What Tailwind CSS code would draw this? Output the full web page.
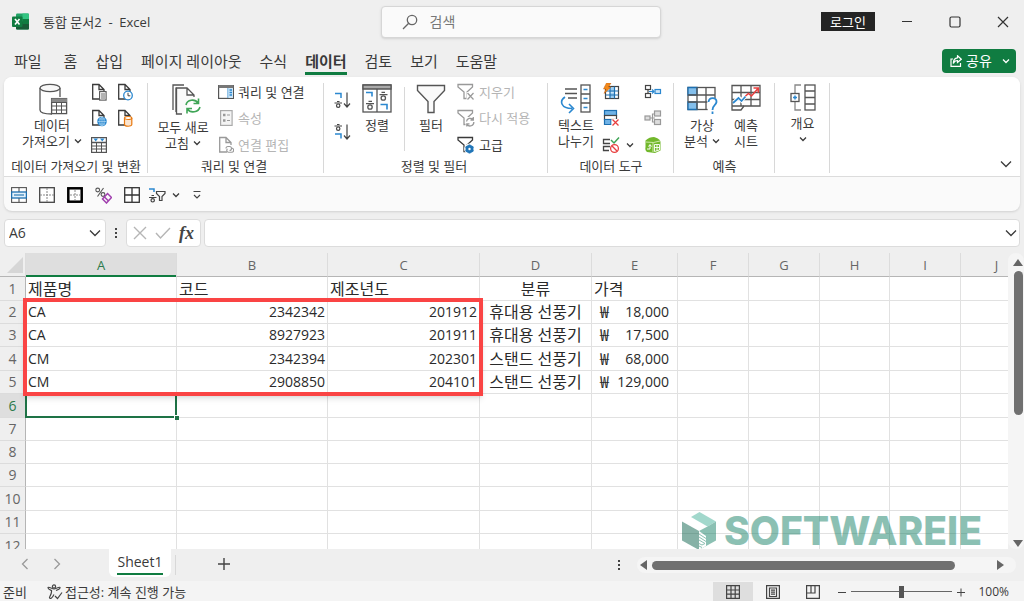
<!DOCTYPE html>
<html lang="ko">
<head>
<meta charset="utf-8">
<title>통합 문서2 - Excel</title>
<meta name="viewport" content="width=device-width, initial-scale=1">
<script src="https://cdn.jsdelivr.net/npm/@tailwindcss/browser@4"></script>
</head>
<body class="flex h-screen flex-col overflow-hidden bg-[#efefef] font-['Open_Sans','Noto_Sans_CJK_KR',sans-serif] text-[13px] leading-4 text-[#3a3a3a]">

<svg class="hidden">
  <symbol id="chev" viewBox="0 0 8 8"><path d="M1 2.5 4 5.5 7 2.5" fill="none" stroke="currentColor" stroke-width="1.3"/></symbol>
  <symbol id="chevL" viewBox="0 0 12 12"><path d="M1 3.5 6 8.5 11 3.5" fill="none" stroke="currentColor" stroke-width="1.3"/></symbol>
  <symbol id="page" viewBox="0 0 16 18"><path d="M9 16H1.7V1.5H8L13 6.5V9M8 1.5V6.5H13" fill="none" stroke="currentColor" stroke-width="1.3"/></symbol>
  <symbol id="funnel" viewBox="0 0 18 18"><path d="M1 1.5H15.500V4L10 9V15.500H7V9L1 4Z" fill="none" stroke="currentColor" stroke-width="1.3"/></symbol>
</svg>

<header class="grid h-[43px] shrink-0 grid-cols-[1fr_280px_1fr] items-center pl-[17px]">
  <div class="flex items-center gap-[14px]">
    <svg class="-ml-[5px] h-[17px] w-[17px]" viewBox="0 0 17 17">
      <rect x="4" y="0.500" width="13" height="16" rx="1.200" fill="#21a366"/><path d="M10.500 .5H16a1 1 0 0 1 1 1V6H10.500Z" fill="#33c481"/><path d="M4 8.500H17V15.500a1 1 0 0 1-1 1H5a1 1 0 0 1-1-1Z" fill="#185c37"/><path d="M10.500 6H17V11H10.500Z" fill="#107c41"/>
      <rect x="0" y="3.500" width="10.500" height="10.500" rx="1" fill="#107c41"/><path d="M3 6 7.500 11.500M7.500 6 3 11.500" stroke="#fff" stroke-width="1.600"/>
    </svg>
    <h1 class="pt-px text-[13px] leading-4 whitespace-pre">통합 문서2  -  Excel</h1>
  </div>
  <label class="flex h-8 items-center gap-3 rounded-sm border border-[#d6d6d6] bg-[#fafafa] pl-5 shadow-sm">
    <svg class="h-4 w-4 text-[#666]" viewBox="0 0 16 16" fill="none" stroke="currentColor" stroke-width="1.3"><circle cx="10" cy="6" r="4.700"/><path d="M6.700 9.300 1 15"/></svg>
    <span class="sr-only">검색</span>
    <input type="text" placeholder="검색" class="h-7 w-40 bg-transparent text-sm leading-6 outline-none placeholder:text-[#777]">
  </label>
  <div class="flex items-center justify-end gap-4 pr-[5px]">
    <button class="h-[19px] w-[54px] bg-[#242424] text-[13px] leading-[18px] text-white">로그인</button>
    <button class="flex w-8 justify-center" aria-label="최소화"><svg class="h-3 w-3" viewBox="0 0 12 12"><path d="M1 5.500H11" stroke="#333"/></svg></button>
    <button class="flex w-8 justify-center" aria-label="최대화"><svg class="h-3 w-3" viewBox="0 0 12 12"><rect x="1" y="1" width="10" height="10" rx="1.500" fill="none" stroke="#333" stroke-width="1.200"/></svg></button>
    <button class="flex w-8 justify-center" aria-label="닫기"><svg class="h-3 w-3" viewBox="0 0 12 12"><path d="M1 1 11 11M11 1 1 11" stroke="#333" stroke-width="1.200"/></svg></button>
  </div>
</header>

<nav class="flex h-[34px] shrink-0 items-start gap-[18px] pt-2 pr-2 pl-[14px] text-[15px] leading-[21px] whitespace-nowrap">
  <button class="mr-1 h-6 border-b-3 border-transparent">파일</button>
  <button class="h-6 border-b-3 border-transparent">홈</button>
  <button class="h-6 border-b-3 border-transparent">삽입</button>
  <button class="h-6 border-b-3 border-transparent">페이지 레이아웃</button>
  <button class="h-6 border-b-3 border-transparent">수식</button>
  <button class="h-6 border-b-3 border-[#107c41] font-bold">데이터</button>
  <button class="h-6 border-b-3 border-transparent">검토</button>
  <button class="h-6 border-b-3 border-transparent">보기</button>
  <button class="h-6 border-b-3 border-transparent">도움말</button>
  <button class="-mt-0.5 ml-auto flex h-6 w-[74px] items-center gap-1 rounded bg-[#107c41] pl-2 text-sm text-white">
    <svg class="h-3 w-3 shrink-0" viewBox="0 0 12 12" fill="none" stroke="#fff" stroke-width="1.200"><path d="M3 4H1V11.300H10.500V8M7.500 .8 11.300 4.200 7.500 7.500V5.500C5.500 5.500 4 6.500 3.300 8.500 3.300 5 5 3 7.500 2.800Z"/></svg>
    공유
    <svg class="ml-1.5 h-2 w-2 shrink-0"><use href="#chev"/></svg>
  </button>
</nav>

<section class="mx-1 shrink-0 rounded-lg bg-[#fafafa] shadow-sm">
  <div class="relative flex h-[100px] rounded-t-lg border-b border-[#dcdcdc] bg-white pt-0.5">

    <div class="flex w-36 flex-col">
      <div class="flex h-[79px] pl-[14px]">
        <button class="flex w-[68px] flex-col items-center pt-1 whitespace-nowrap">
          <svg class="mb-0.5 h-8 w-8" viewBox="0 0 32 32"><path d="M4 5V27C4 29.500 9 31 16 31M24 5V14" fill="none" stroke="#555" stroke-width="1.300"/><ellipse cx="14" cy="5" rx="10" ry="3.700" fill="#f8f8f8" stroke="#555" stroke-width="1.300"/><rect x="15.600" y="15.600" width="15" height="15" fill="#fff" stroke="#555" stroke-width="1.300"/><path d="M15.500 15.500H31V19H15.500Z" fill="#888"/><path d="M15.500 19.500H31M15.500 23H31M15.500 27H31M20.500 19V31M25.500 19V31" stroke="#555"/></svg>
          <span>데이터</span><span class="flex items-center gap-1">가져오기 <svg class="h-2 w-2"><use href="#chev"/></svg></span>
        </button>
        <div class="grid grid-cols-[26px_26px] grid-rows-3 items-center justify-items-center">
          <button aria-label="텍스트/CSV에서"><svg class="h-[18px] w-4" viewBox="0 0 16 18"><use href="#page"/><rect x="8.600" y="8.600" width="6.500" height="8.500" fill="#fff" stroke="#555" stroke-width="1.100"/><path d="M10 11H14M10 13H14M10 15H14" stroke="#555" stroke-width=".9"/></svg></button>
          <button aria-label="최근 원본"><svg class="h-[18px] w-4" viewBox="0 0 16 18"><use href="#page"/><circle cx="11" cy="12.500" r="4.300" fill="#fff" stroke="#2b88d0" stroke-width="1.300"/><path d="M11 9.800V12.800H13.300" fill="none" stroke="#444"/></svg></button>
          <button aria-label="웹"><svg class="h-[18px] w-4" viewBox="0 0 16 18"><use href="#page"/><circle cx="11" cy="12.500" r="4.800" fill="#2b88d0"/><path d="M6.500 12.500H15.500M11 8V17M8 10H14M8 15H14" stroke="#bfe0f5" stroke-width=".6"/><ellipse cx="11" cy="12.500" rx="2.200" ry="4.500" fill="none" stroke="#bfe0f5" stroke-width=".6"/></svg></button>
          <button aria-label="기존 연결"><svg class="h-[18px] w-4" viewBox="0 0 16 18"><use href="#page"/><path d="M7.500 9V15.500C7.500 17.800 14.800 17.800 14.800 15.500V9" fill="#fbe5d0" stroke="#e8790f" stroke-width="1.200"/><ellipse cx="11.150" cy="9" rx="3.650" ry="1.500" fill="#fff" stroke="#e8790f" stroke-width="1.200"/></svg></button>
          <button aria-label="테이블"><svg class="h-4 w-4" viewBox="0 0 16 16"><rect x=".6" y=".6" width="14.800" height="14.800" fill="#fff" stroke="#555" stroke-width="1.200"/><path d="M.6 5.500H15.400" stroke="#555" stroke-width="1.500"/><path d="M1 9H15M1 12H15M5.500 5.500V15M10.500 5.500V15" stroke="#555"/><path d="M2.500 1.500H7L4.750 4.500ZM9 1.500H13.500L11.250 4.500Z" fill="#2b88d0"/></svg></button>
        </div>
      </div>
      <div class="text-center whitespace-nowrap">데이터 가져오기 및 변환</div>
    </div>
    <div class="-ml-px h-[90px] w-px self-center bg-[#d8d8d8]"></div>

    <div class="flex w-44 flex-col">
      <div class="flex h-[79px] pl-1">
        <button class="flex w-[62px] flex-col items-center pt-1 whitespace-nowrap">
          <svg class="mb-1 ml-1 h-8 w-8" viewBox="0 0 32 32" fill="none" stroke="#555" stroke-width="1.300"><path d="M4 27V2H15M7 29V4.500"/><path d="M13 31H7.500V5H18L25 12V14M18 5V12H25" fill="#fafafa"/><path d="M17 22C18 16.500 26 15.500 29 20M29.500 15.500V20.500H24.500M31 24C29.500 29.500 21.500 30.500 18.500 26M18 30.500V25.500H23" stroke="#3fa556" stroke-width="1.600"/></svg>
          <span>모두 새로</span><span class="flex items-center gap-1">고침 <svg class="h-2 w-2"><use href="#chev"/></svg></span>
        </button>
        <div class="grid grid-rows-3 pl-1 whitespace-nowrap">
          <button class="flex items-center gap-1"><svg class="h-4 w-4" viewBox="0 0 16 16"><rect x=".6" y="1.600" width="14.800" height="12.800" fill="#fff" stroke="#555" stroke-width="1.200"/><path d="M.5 1H15.500V4H.5Z" fill="#777"/><path d="M10 4V14" stroke="#2b88d0"/><path d="M10.500 4H15V14H10.500Z" fill="#cfe6f7"/><path d="M11.500 6H14M11.500 8.500H14M11.500 11H14" stroke="#2b88d0" stroke-width="1.300"/></svg>쿼리 및 연결</button>
          <button class="flex items-center gap-1 text-[#b5b5b5]"><svg class="h-4 w-4" viewBox="0 0 16 16"><rect x="2.600" y=".6" width="11.500" height="14.800" fill="#f4f4f4" stroke="#aaa" stroke-width="1.200"/><path d="M5 5H7.500M5 10.500H7.500" stroke="#999" stroke-width="2.500"/><path d="M9 5H12M9 10.500H12" stroke="#999"/></svg>속성</button>
          <button class="flex items-center gap-1 text-[#b5b5b5]"><svg class="h-[18px] w-4 text-[#999]" viewBox="0 0 16 18"><use href="#page"/><path d="M8 12.500a2 2 0 0 1 2-2H11.500a2 2 0 0 1 0 4M13.500 12a2 2 0 0 1 0 4.300H10.500a2 2 0 0 1-1-3.500" fill="none" stroke="#999" stroke-width="1.100"/></svg>연결 편집</button>
        </div>
      </div>
      <div class="pr-1 text-center">쿼리 및 연결</div>
    </div>
    <div class="-ml-px h-[90px] w-px self-center bg-[#d8d8d8]"></div>

    <div class="flex w-56 flex-col">
      <div class="flex h-[79px] pl-2">
        <div class="flex w-5 flex-col items-center gap-3.5 pt-3">
          <button aria-label="오름차순 정렬"><svg class="h-[18px] w-[18px]" viewBox="0 0 18 18" fill="none" stroke="#444" stroke-width="1.200"><path d="M2 2.500H8V7" stroke="#2b88d0" stroke-width="1.500"/><path d="M4 10.500H6.500M1.500 12H9"/><circle cx="5.200" cy="14.700" r="1.700"/><path d="M14 1.500V16M11 12.500 14 16 17 12.500"/></svg></button>
          <button aria-label="내림차순 정렬"><svg class="h-[18px] w-[18px]" viewBox="0 0 18 18" fill="none" stroke="#444" stroke-width="1.200"><path d="M4 1.500H6.500M1.500 3H9"/><circle cx="5.200" cy="5.700" r="1.700"/><path d="M2 11H8V15.500" stroke="#2b88d0" stroke-width="1.500"/><path d="M14 1.500V16M11 12.500 14 16 17 12.500"/></svg></button>
        </div>
        <button class="flex w-[50px] flex-col items-center pt-1">
          <svg class="mb-0.5 h-8 w-8" viewBox="0 0 32 32" fill="none" stroke="#555" stroke-width="1.300"><rect x="2" y="2" width="28" height="27" fill="#fff"/><path d="M2 2H30V6H2Z" fill="#aaa"/><path d="M16 6V29"/><path d="M5 9.500H11V13.500M19.500 21.500H26V26.500" stroke="#2b88d0" stroke-width="1.600"/><path d="M20.500 9.300H24M18.500 11.700H26.500M7.500 18.300H11M5 20.700H13"/><circle cx="22.300" cy="15" r="2.200"/><circle cx="9" cy="24" r="2.200"/></svg>
          정렬
        </button>
        <div class="mt-2 ml-0.5 h-16 w-px bg-[#d8d8d8]"></div>
        <button class="flex w-[52px] flex-col items-center pt-1">
          <svg class="mb-0.5 h-8 w-8" viewBox="0 0 32 32"><path d="M2.500 2.500H29.500V7.500L19 18.500V29.500H13V18.500L2.500 7.500Z" fill="#fafafa" stroke="#555" stroke-width="1.400"/></svg>
          필터
        </button>
        <div class="grid grid-rows-3 whitespace-nowrap">
          <button class="flex items-center gap-1 text-[#b5b5b5]"><svg class="h-[18px] w-[18px] text-[#999]" viewBox="0 0 18 18"><use href="#funnel"/><path d="M9.500 9H18V18H9.500Z" fill="#fff"/><path d="M10.500 10 16.500 16.500M16.500 10 10.500 16.500" stroke="#999" stroke-width="1.200"/></svg>지우기</button>
          <button class="flex items-center gap-1 text-[#b5b5b5]"><svg class="h-[18px] w-[18px] text-[#999]" viewBox="0 0 18 18"><use href="#funnel"/><path d="M8.500 8H18V18H8.500Z" fill="#fff"/><path d="M9.500 12.500A3.800 3.800 0 0 1 16 10.500M16.300 8V11H13.500M16.800 13A3.800 3.800 0 0 1 10 15.500M9.800 17.500V14.800H12.500" fill="none" stroke="#999" stroke-width="1.300"/></svg>다시 적용</button>
          <button class="flex items-center gap-1"><svg class="h-[18px] w-[18px]" viewBox="0 0 18 18"><use href="#funnel"/><circle cx="12.500" cy="13" r="5.400" fill="#fff"/><circle cx="12.500" cy="13" r="2.800" fill="none" stroke="#2176b8" stroke-width="2.400"/><path d="M12.500 8.500V17.500M8.600 10.800 16.400 15.200M16.400 10.800 8.600 15.200" stroke="#2176b8" stroke-width="1.800"/><circle cx="12.500" cy="13" r="1.200" fill="#fff"/></svg>고급</button>
        </div>
      </div>
      <div class="pr-1 text-center">정렬 및 필터</div>
    </div>
    <div class="-ml-px h-[90px] w-px self-center bg-[#d8d8d8]"></div>

    <div class="flex w-[126px] flex-col">
      <div class="flex h-[79px] pl-1.5">
        <button class="flex w-11 shrink-0 flex-col items-center pt-1 whitespace-nowrap">
          <svg class="mb-0.5 h-8 w-8" viewBox="0 0 32 32" fill="none" stroke="#555" stroke-width="1.300"><path d="M5 6H17M5 10.500H17M8 15H17"/><path d="M5 14C-1 18 1 25.500 12 25.500M9 21 13.500 25.500 9 30" stroke="#2b88d0" stroke-width="1.600"/><rect x="21" y="2" width="9" height="27" fill="#fff"/><path d="M21 11H30M21 20H30"/><path d="M23.500 6.500H27.500M23.500 15.500H27.500M23.500 24.500H27.500" stroke="#2b88d0"/></svg>
          <span>텍스트</span><span>나누기</span>
        </button>
        <div class="grid shrink-0 grid-cols-[42px_20px] grid-rows-3 items-center justify-items-start pl-1">
          <button aria-label="빠른 채우기"><svg class="h-[18px] w-[18px]" viewBox="0 0 18 18"><rect x="3.500" y="3.500" width="13" height="12" fill="#fff" stroke="#444" stroke-width="1.200"/><path d="M8 9.500H12.500V15H8ZM8 4H12.500V9H8Z" fill="#9ccdf0"/><path d="M3.500 8H16.500M3.500 12H16.500M8 3.500V15.500M12.500 3.500V15.500" stroke="#1d6fb0" stroke-width="1.200"/><path d="M4.500 0H9L6.500 4H9L2 10.500 4 6H1.500Z" fill="#f28a1c" stroke="#c85a00" stroke-width=".5"/></svg></button>
          <button aria-label="통합"><svg class="h-[18px] w-[18px]" viewBox="0 0 18 18" fill="none" stroke="#444" stroke-width="1.200"><rect x="1.500" y="2.500" width="5" height="4"/><rect x="1.500" y="10.500" width="5" height="4"/><path d="M4 6.500V10.500"/><path d="M5 8.500H10M8 6.500 10 8.500 8 10.500" stroke="#2b88d0"/><rect x="11" y="6.500" width="5.500" height="4" fill="#cfe6f7" stroke="#2b88d0"/></svg></button>
          <button aria-label="중복된 항목 제거"><svg class="h-[18px] w-[18px]" viewBox="0 0 18 18" stroke-width="1.200"><rect x="2.500" y="1.500" width="12" height="5" fill="#6fb2e6" stroke="#1d6fb0"/><rect x="2.500" y="6.500" width="12" height="4" fill="#fff" stroke="#444"/><path d="M2.500 10.500V15.500H9V10.500Z" fill="#6fb2e6" stroke="#1d6fb0"/><path d="M9.500 10H18V18H9.500Z" fill="#fff"/><path d="M10.500 10.500 16.500 16.500M16.500 10.500 10.500 16.500" stroke="#e84040" stroke-width="1.300"/></svg></button>
          <button aria-label="관계"><svg class="h-[18px] w-[18px]" viewBox="0 0 18 18" fill="#ddd" stroke="#999" stroke-width="1.200"><path d="M6 9H11M8.500 9V5H11M8.500 9V13H11" fill="none"/><rect x="1" y="7" width="5" height="4"/><rect x="10.500" y="2" width="6" height="5"/><rect x="10.500" y="10.500" width="6" height="5"/></svg></button>
          <button class="flex items-center gap-1.5" aria-label="데이터 유효성 검사"><svg class="h-[18px] w-[18px]" viewBox="0 0 18 18" fill="none" stroke="#444" stroke-width="1.300"><path d="M8 3.500H1.500V7.500H8M8 10.500H1.500V14.500H7"/><path d="M9 4 12 7 17 1.500" stroke="#3fa556" stroke-width="1.500"/><circle cx="12.500" cy="12.500" r="3.900" stroke="#e84040"/><path d="M9.800 9.800 15.200 15.200" stroke="#e84040"/></svg><svg class="h-2 w-2"><use href="#chev"/></svg></button>
          <button aria-label="데이터 모델 관리"><svg class="h-[18px] w-[18px]" viewBox="0 0 18 18"><path d="M1.500 4.500C4 2 7 1 10 1 14 2 16.500 4 16.500 6V14.500L11 17 3 16C1.500 15 1 13 1.500 11Z" fill="#72b82c"/><path d="M2 6 9.500 6.500 16 5M9 6.500V16" stroke="#d7efb5" stroke-width=".9" fill="none"/><path d="M10.500 8.500H15.500V14L10.500 15.500ZM10.500 11.500H15.500M13 8.500V15" stroke="#fff" stroke-width=".9" fill="none"/><path d="M3 13H6V9M4.500 10.500 6 8.500 7.500 10.500" stroke="#fff" fill="none"/></svg></button>
        </div>
      </div>
      <div class="text-center">데이터 도구</div>
    </div>
    <div class="-ml-px h-[90px] w-px self-center bg-[#d8d8d8]"></div>

    <div class="flex w-[101px] flex-col">
      <div class="flex h-[79px] pl-1.5">
        <button class="flex w-11 flex-col items-center pt-1 whitespace-nowrap">
          <svg class="mb-0.5 h-8 w-8" viewBox="0 0 32 32" fill="none" stroke="#555" stroke-width="1.300"><rect x="2" y="4.500" width="27" height="22" fill="#fff"/><path d="M2 4.500H11V12H2ZM2 19H11V26.500H2Z" fill="#83bfec" stroke="#1d6fb0"/><path d="M2 12H29M2 19H29M11 4.500V26.500M20 4.500V26.500"/><path d="M21 15H32V32H22Z" fill="#fff" stroke="none"/><path d="M22.500 19C23 13.500 31 14 30.500 19 30 22.500 26.500 22 26.500 27M26.500 28.500V31" stroke="#2b88d0" stroke-width="1.800"/></svg>
          <span>가상</span><span class="flex items-center gap-1">분석 <svg class="h-2 w-2"><use href="#chev"/></svg></span>
        </button>
        <button class="flex w-11 flex-col items-center pt-1 whitespace-nowrap">
          <svg class="mb-0.5 h-8 w-8" viewBox="0 0 32 32" fill="none" stroke="#555" stroke-width="1.300"><path d="M2 2.500H30V23H14L11 27H2Z" fill="#fff"/><path d="M2 9.500H30M2 16.500H30M2 23H14M11 2.500V23M21 2.500V23"/><path d="M4 19.500 8.500 14.500 11.500 17.500 15.500 13" stroke="#fff" stroke-width="4"/><path d="M3 20 8.500 15 11.500 18 15.500 13.500" stroke="#2b88d0" stroke-width="1.700"/><path d="M15.500 13 18.500 10.500 21.500 13 28 5.500M23.500 5H28.300V9.800" stroke="#e84040" stroke-width="1.600"/></svg>
          <span>예측</span><span>시트</span>
        </button>
      </div>
      <div class="text-center">예측</div>
    </div>
    <div class="-ml-px h-[90px] w-px self-center bg-[#d8d8d8]"></div>

    <div class="flex w-[55px] flex-col items-center">
      <button class="flex flex-col items-center pt-0.5">
        <svg class="mb-0.5 h-8 w-8" viewBox="0 0 32 32" fill="none" stroke="#555" stroke-width="1.300"><path d="M14 4H8V29H14" stroke="#888"/><rect x="18" y="4" width="10" height="25" fill="#fff"/><path d="M18 10H28M18 16.500H28M18 23H28"/><rect x="4" y="12.500" width="8" height="8" fill="#fff"/><path d="M8 14.500V18.500M6 16.500H10" stroke="#2b88d0" stroke-width="1.500"/></svg>
        개요
        <svg class="mt-1 h-2 w-2"><use href="#chev"/></svg>
      </button>
    </div>
    <div class="-ml-px h-[90px] w-px self-center bg-[#d8d8d8]"></div>
    <button class="mr-2 mb-1.5 ml-auto self-end" aria-label="리본 축소"><svg class="h-3 w-3"><use href="#chevL"/></svg></button>
  </div>

  <div class="flex h-[34px] items-center gap-3 pt-0.5 pl-[7px]">
    <button aria-label="셀 병합"><svg class="h-4 w-4" viewBox="0 0 16 16" fill="none" stroke="#555" stroke-width="1.100"><rect x=".6" y=".6" width="14.800" height="14.800" fill="#fff"/><path d="M8 .6V5M8 11V15.400"/><rect x=".6" y="5" width="14.800" height="6" fill="#e3f1fb" stroke="#1d6fb0" stroke-width="1.300"/><path d="M3 8H13" stroke="#1d6fb0"/></svg></button>
    <button aria-label="바깥쪽 테두리"><svg class="h-4 w-4" viewBox="0 0 16 16" fill="none" stroke="#444"><rect x=".7" y=".7" width="14.600" height="14.600" fill="#fff" stroke-width="1.300"/><path d="M8 1V15M1 8H15" stroke="#888" stroke-dasharray="2 1"/></svg></button>
    <button aria-label="굵은 바깥쪽 테두리"><svg class="h-4 w-4" viewBox="0 0 16 16" fill="none"><rect x="1.300" y="1.300" width="13.400" height="13.400" fill="#fff" stroke="#000" stroke-width="2.500"/><path d="M8 3V13M3 8H13" stroke="#888" stroke-dasharray="2 1"/></svg></button>
    <button aria-label="서식 지우기"><svg class="h-[17px] w-[17px]" viewBox="0 0 17 17" fill="none" stroke="#555" stroke-width="1.100"><circle cx="2.700" cy="3" r="1.900"/><circle cx="8" cy="7.500" r="1.900"/><path d="M8.500 1 2.500 9.500"/><path d="M12.500 6.500 16.500 10.500 11.500 16 7.500 12ZM9.500 10 13.500 14" stroke="#a03fae" stroke-width="1.500"/></svg></button>
    <button aria-label="모든 테두리"><svg class="h-4 w-4" viewBox="0 0 16 16" fill="none" stroke="#333" stroke-width="1.300"><rect x=".7" y=".7" width="14.600" height="14.600" fill="#fff"/><path d="M8 1V15M1 8H15"/></svg></button>
    <button class="-ml-1 flex items-center gap-1.5" aria-label="정렬 및 필터"><svg class="h-4 w-[18px]" viewBox="0 0 18 16" fill="none" stroke="#444" stroke-width="1.200"><path d="M1 2H6V5" stroke="#2b88d0" stroke-width="1.500"/><path d="M3.500 8.500H6M1 10.500H8.500"/><circle cx="4.700" cy="13.300" r="1.700"/><path d="M8.500 4.500H17V6.500L14 9.500V13.500H11.500V9.500L8.500 6.500Z"/></svg><svg class="h-2 w-2"><use href="#chev"/></svg></button>
    <button aria-label="빠른 실행 도구 모음 사용자 지정"><svg class="h-2.5 w-2.5" viewBox="0 0 10 10" fill="none" stroke="#444" stroke-width="1.200"><path d="M1.500 1.500H8.500M2 5 5 8 8 5"/></svg></button>
  </div>
</section>

<div class="mx-1 mt-2 flex h-7 shrink-0 items-stretch">
  <div class="flex w-[102px] items-center rounded border border-[#dcdcdc] bg-white pr-1 pl-1">
    <input aria-label="이름 상자" value="A6" class="w-0 flex-1 bg-transparent text-sm outline-none"><button aria-label="이름 목록"><svg class="h-3 w-3"><use href="#chevL"/></svg></button>
  </div>
  <div class="flex w-5 items-center justify-center"><svg class="h-3 w-1" viewBox="0 0 4 12" fill="#444"><path d="M1 1H3V3H1ZM1 5H3V7H1ZM1 9H3V11H1Z"/></svg></div>
  <div class="flex w-[75px] items-center justify-between rounded border border-[#dcdcdc] bg-white px-1.5">
    <button aria-label="취소"><svg class="h-3.5 w-3.5" viewBox="0 0 14 14"><path d="M1 1 13 13M13 1 1 13" stroke="#b5b5b5" stroke-width="1.400"/></svg></button>
    <button aria-label="입력"><svg class="h-3.5 w-4" viewBox="0 0 16 14"><path d="M1 7 5.500 12 15 2" fill="none" stroke="#b5b5b5" stroke-width="1.400"/></svg></button>
    <button aria-label="함수 삽입" class="font-['Liberation_Serif',serif] text-lg leading-5 font-bold text-[#444] italic">fx</button>
  </div>
  <div class="ml-[3px] flex flex-1 items-center rounded border border-[#dcdcdc] bg-white pr-0.5">
    <input aria-label="수식 입력줄" class="w-0 flex-1 bg-transparent px-2 text-sm outline-none"><button aria-label="수식 입력줄 확장"><svg class="h-3 w-3"><use href="#chevL"/></svg></button>
  </div>
</div>

<main class="mt-1.5 flex min-h-0 flex-1">
  <div class="relative min-w-0 flex-1 overflow-hidden">
    <table class="w-[1033px] table-fixed border-separate border-spacing-0 text-sm leading-5 text-[#2a2a2a] [&_tbody_th]:border-r [&_tbody_th]:border-b [&_tbody_th]:border-r-[#b5b5b5] [&_tbody_th]:border-b-[#dcdcdc] [&_td]:border-r [&_td]:border-b [&_td]:border-[#e1e1e1] [&_td]:bg-white [&_td]:px-0.5 [&_td]:py-0 [&_th]:p-0 [&_th]:font-normal [&_th]:text-[#666] [&_thead_th]:border-r [&_thead_th]:border-b [&_thead_th]:border-r-[#dcdcdc] [&_thead_th]:border-b-[#b5b5b5]">
      <colgroup><col class="w-[26px]"><col class="w-[151px]"><col class="w-[151px]"><col class="w-[152px]"><col class="w-[112px]"><col class="w-[86px]"><col class="w-[71px]"><col class="w-[71px]"><col class="w-[70px]"><col class="w-[71px]"><col class="w-[72px]"></colgroup>
      <thead>
        <tr class="h-6 text-[13px]">
          <th><svg class="ml-auto h-5 w-5" viewBox="0 0 20 20"><path d="M18 2V18H2Z" fill="#d6d6d6"/></svg></th>
          <th scope="col" class="bg-[#dedede]"><div class="-mb-px border-b-2 border-[#107c41] pt-0.5 text-[#2b7a4b]">A</div></th>
          <th scope="col">B</th><th scope="col">C</th><th scope="col">D</th><th scope="col">E</th><th scope="col">F</th><th scope="col">G</th><th scope="col">H</th><th scope="col">I</th><th scope="col">J</th>
        </tr>
      </thead>
      <tbody>
        <tr class="h-[24px]"><th scope="row">1</th><td class="text-base leading-5">제품명</td><td class="text-base leading-5">코드</td><td class="text-base leading-5">제조년도</td><td class="text-center text-base leading-5">분류</td><td class="text-base leading-5">가격</td><td></td><td></td><td></td><td></td><td></td></tr>
        <tr class="h-[23px]"><th scope="row">2</th><td>CA</td><td class="text-right">2342342</td><td class="text-right">201912</td><td class="text-center text-base leading-5">휴대용 선풍기</td><td><div class="flex justify-between px-1.5"><span class="text-base leading-5">₩</span><span>18,000</span></div></td><td></td><td></td><td></td><td></td><td></td></tr>
        <tr class="h-[23px]"><th scope="row">3</th><td>CA</td><td class="text-right">8927923</td><td class="text-right">201911</td><td class="text-center text-base leading-5">휴대용 선풍기</td><td><div class="flex justify-between px-1.5"><span class="text-base leading-5">₩</span><span>17,500</span></div></td><td></td><td></td><td></td><td></td><td></td></tr>
        <tr class="h-[24px]"><th scope="row">4</th><td>CM</td><td class="text-right">2342394</td><td class="text-right">202301</td><td class="text-center text-base leading-5">스탠드 선풍기</td><td><div class="flex justify-between px-1.5"><span class="text-base leading-5">₩</span><span>68,000</span></div></td><td></td><td></td><td></td><td></td><td></td></tr>
        <tr class="h-[23px]"><th scope="row">5</th><td>CM</td><td class="text-right">2908850</td><td class="text-right">204101</td><td class="text-center text-base leading-5">스탠드 선풍기</td><td><div class="flex justify-between px-1.5"><span class="text-base leading-5">₩</span><span>129,000</span></div></td><td></td><td></td><td></td><td></td><td></td></tr>
        <tr class="h-[24px]"><th scope="row" class="bg-[#dedede]"><span class="text-[#2b7a4b]">6</span></th><td class="relative"><div class="absolute -inset-px border-2 border-[#1e7346]"><i class="absolute -right-1 -bottom-1 h-[5px] w-[5px] border-t border-l border-white bg-[#1e7346]"></i></div></td><td></td><td></td><td></td><td></td><td></td><td></td><td></td><td></td><td></td></tr>
        <tr class="h-[23px]"><th scope="row">7</th><td></td><td></td><td></td><td></td><td></td><td></td><td></td><td></td><td></td><td></td></tr>
        <tr class="h-[23px]"><th scope="row">8</th><td></td><td></td><td></td><td></td><td></td><td></td><td></td><td></td><td></td><td></td></tr>
        <tr class="h-[23px]"><th scope="row">9</th><td></td><td></td><td></td><td></td><td></td><td></td><td></td><td></td><td></td><td></td></tr>
        <tr class="h-[24px]"><th scope="row">10</th><td></td><td></td><td></td><td></td><td></td><td></td><td></td><td></td><td></td><td></td></tr>
        <tr class="h-[23px]"><th scope="row">11</th><td></td><td></td><td></td><td></td><td></td><td></td><td></td><td></td><td></td><td></td></tr>
        <tr class="h-[24px]"><th scope="row">12</th><td></td><td></td><td></td><td></td><td></td><td></td><td></td><td></td><td></td><td></td></tr>
      </tbody>
    </table>
    <div class="absolute top-[45px] left-[23px] h-[98px] w-[460px] border-4 border-[#fa4444] shadow-md"></div>
    <div class="absolute right-[26px] bottom-0 flex h-9 items-center gap-2 opacity-50">
      <svg class="h-[38px] w-[34px]" viewBox="0 0 34 38"><path d="M9 5 17.500 0 34 9.500 25.500 14.500Z" fill="#47b39b"/><path d="M0 9.500 17 19V38L0 28.500Z" fill="#0f6650"/><path d="M34 9.500V28.500L17 38V19L25.500 14.500Z" fill="#1a8369"/><path d="M17 19 24 24V34L17 38Z" fill="#fff"/><path d="M17 22 24 26.500M17 25 24 29.500M17 28 23 31.500 20 33 17 31.500M17 34 20 35.500" stroke="#1a8369" fill="none"/></svg>
      <span class="font-[Inter,sans-serif] text-[39px] leading-9 font-extrabold text-[#1a8369]">SOFTWAREIE</span>
    </div>
  </div>
  <div class="flex w-4 flex-col items-center rounded-lg bg-[#f5f5f5] pl-1 pt-1.5">
    <svg class="h-2 w-2.5 shrink-0" viewBox="0 0 10 8"><path d="M5 0 10 7H0Z" fill="#666"/></svg>
    <div class="mt-1 h-36 w-[9px] rounded-full bg-[#707070]"></div>
    <svg class="mt-auto mb-0.5 h-2 w-2.5 shrink-0" viewBox="0 0 10 8"><path d="M5 8 10 1H0Z" fill="#666"/></svg>
  </div>
</main>

<div class="flex h-8 shrink-0 items-start">
  <button class="ml-[19px] pt-[9px] text-[#999]" aria-label="이전 시트"><svg class="h-3 w-3 rotate-90"><use href="#chevL"/></svg></button>
  <button class="ml-5 pt-[9px] text-[#999]" aria-label="다음 시트"><svg class="h-3 w-3 -rotate-90"><use href="#chevL"/></svg></button>
  <button class="ml-[46px] h-7 w-[62px] rounded-b-md bg-white px-2"><span class="block border-b-2 border-[#107c41] text-sm leading-[22px]">Sheet1</span></button>
  <div class="mt-1.5 ml-1 h-5 w-px bg-[#d8d8d8]"></div>
  <button class="ml-[42px] pt-[9px]" aria-label="새 시트"><svg class="h-3 w-3" viewBox="0 0 12 12"><path d="M6 0V12M0 6H12" stroke="#444" stroke-width="1.400"/></svg></button>
  <div class="ml-auto flex h-8 items-center pr-2">
    <svg class="mr-4 h-3 w-1" viewBox="0 0 4 12" fill="#444"><path d="M1 1H3V3H1ZM1 5H3V7H1ZM1 9H3V11H1Z"/></svg>
    <div class="flex h-4 w-[379px] items-center rounded-full bg-[#f5f5f5] pr-3 pl-[3px]">
      <svg class="h-2.5 w-2" viewBox="0 0 8 10"><path d="M0 5 7 0V10Z" fill="#666"/></svg>
      <div class="ml-1 h-[9px] w-[303px] rounded-full bg-[#707070]"></div>
      <svg class="ml-auto h-2.5 w-2" viewBox="0 0 8 10"><path d="M8 5 1 0V10Z" fill="#666"/></svg>
    </div>
  </div>
</div>

<footer class="flex h-5 shrink-0 items-center bg-[#f4f4f4] pl-[3px] text-[13px]">
  <span class="mr-5 pt-0.5">준비</span>
  <button class="flex items-center gap-0.5 pt-0.5"><svg class="h-4 w-4" viewBox="0 0 16 16" fill="none" stroke="#444" stroke-width="1.200"><circle cx="7" cy="2.500" r="1.600"/><path d="M1 3.500C.5 5 2 5.500 4.500 6.500 5 9 3 12 2.500 13.500 3 15.500 5 14.500 7 10.500M9 6.500C12 5.500 13.500 5 13 3.500 12 2.500 9 5 7 5 5 5 2 2.500 1 3.500M8 12 10.500 14.500 15 8.500"/></svg>접근성: 계속 진행 가능</button>
  <div class="ml-auto flex h-5 items-center pt-px">
    <button class="flex h-5 w-10 items-center justify-center bg-[#dedede]" aria-label="기본"><svg class="h-3.5 w-3.5" viewBox="0 0 14 14" fill="none" stroke="#444" stroke-width="1.200"><path d="M.6 .6H13.400V13.400H.6ZM.6 5H13.400M.6 9.200H13.400M5 .6V13.400M9.200 .6V13.400"/></svg></button>
    <button class="flex h-5 w-10 items-center justify-center" aria-label="페이지 레이아웃"><svg class="h-3.5 w-3.5" viewBox="0 0 14 14" fill="none" stroke="#444" stroke-width="1.200"><path d="M.6 .6H13.400V13.400H.6ZM3.500 3H10.500V11.500H3.500ZM5 5.200H9M5 7.200H9M5 9.200H9"/></svg></button>
    <button class="flex h-5 w-10 items-center justify-center" aria-label="페이지 나누기 미리 보기"><svg class="h-3.5 w-3.5" viewBox="0 0 14 14" fill="none" stroke="#444" stroke-width="1.200"><path d="M.6 .6H13.400V13.400H.6ZM5 .6V8M9 .6V8H.6"/></svg></button>
    <button class="ml-1" aria-label="축소"><svg class="h-2.5 w-2.5" viewBox="0 0 10 10"><path d="M1 5.500H9" stroke="#444"/></svg></button>
    <input type="range" min="10" max="190" value="100" aria-label="확대/축소" class="mx-1 h-3 w-[101px] appearance-none bg-[linear-gradient(#666,#666)] bg-[length:100%_1px] bg-center bg-no-repeat [&::-webkit-slider-thumb]:h-3 [&::-webkit-slider-thumb]:w-[5px] [&::-webkit-slider-thumb]:appearance-none [&::-webkit-slider-thumb]:bg-[#555]">
    <button aria-label="확대"><svg class="h-2.5 w-2.5" viewBox="0 0 10 10"><path d="M1 5.500H9M5 1.500V9.500" stroke="#444"/></svg></button>
    <span class="mr-[15px] ml-3 text-xs">100%</span>
  </div>
</footer>
</body>
</html>
